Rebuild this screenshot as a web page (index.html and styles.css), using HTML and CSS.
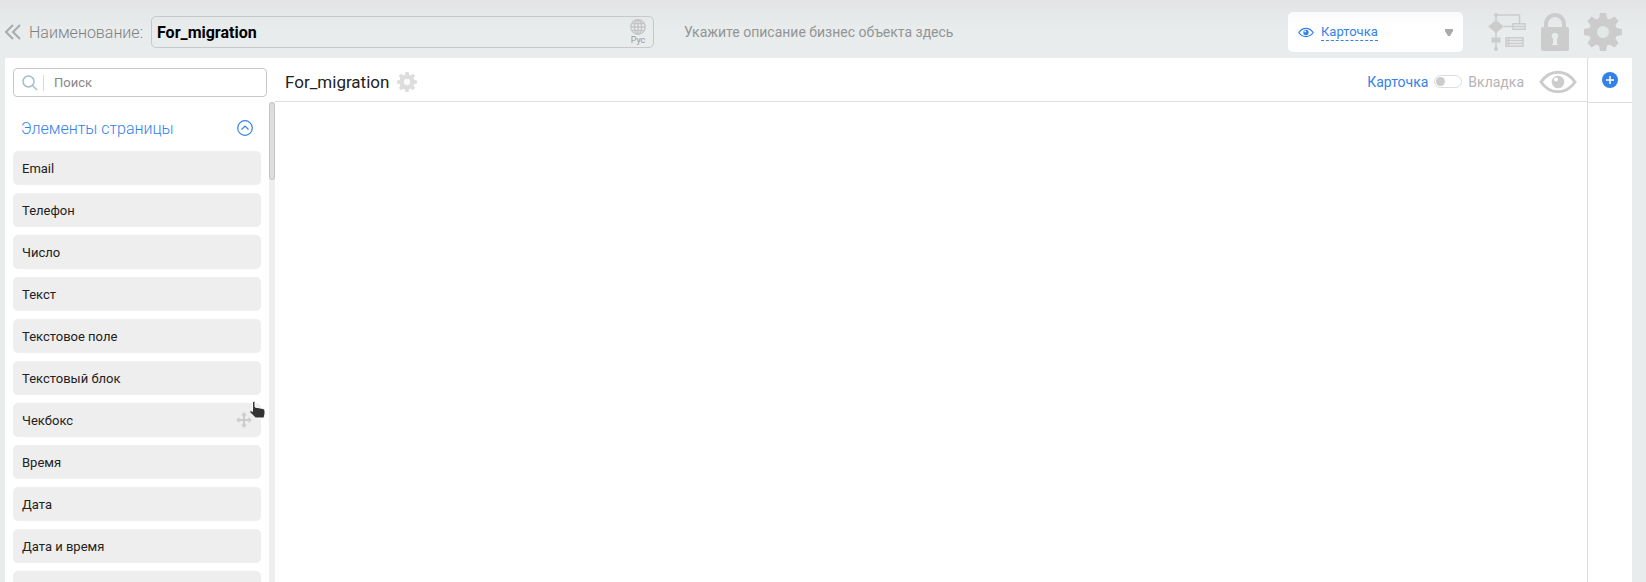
FILE: index.html
```html
<!DOCTYPE html>
<html lang="ru">
<head>
<meta charset="utf-8">
<title>For_migration</title>
<link rel="stylesheet" href="styles.css">
</head>
<body>
<svg class="defs" aria-hidden="true">
  <symbol id="cog" viewBox="0 0 38 38"><mask id="hole"><path fill="#fff" d="M0 0h38v38H0z"/><circle cx="19" cy="19" r="6"/></mask><g mask="url(#hole)"><circle cx="19" cy="19" r="14"/><path id="tooth" d="M13 8l2-3 1-5h6l1 5 2 3z"/><use href="#tooth" transform="rotate(45 19 19)"/><use href="#tooth" transform="rotate(90 19 19)"/><use href="#tooth" transform="rotate(135 19 19)"/><use href="#tooth" transform="rotate(180 19 19)"/><use href="#tooth" transform="rotate(225 19 19)"/><use href="#tooth" transform="rotate(270 19 19)"/><use href="#tooth" transform="rotate(315 19 19)"/></g></symbol>
  <symbol id="eye" viewBox="0 0 38 24"><path fill="none" stroke="currentColor" stroke-width="3" d="M2 12C11-1 27-1 36 12C27 25 11 25 2 12z"/><circle cx="19" cy="12" r="6.3"/><circle class="glint" cx="17" cy="9.5" r="2"/></symbol>
</svg>
<header class="topbar">
  <button class="icon-btn back" aria-label="Назад"><svg width="16" height="16" viewBox="0 0 16 16" fill="none" stroke="currentColor" stroke-width="2"><path d="M8 1L1 8l7 7M15 1L8 8l7 7"/></svg></button>
  <label class="name-label" for="name">Наименование:</label>
  <div class="name-box">
    <input id="name" class="name-input" type="text" value="For_migration">
    <button class="lang"><svg width="16" height="16" viewBox="0 0 16 16" fill="none" stroke="currentColor" stroke-width="1.3"><circle cx="8" cy="8" r="7.3"/><ellipse cx="8" cy="8" rx="3.6" ry="7.3"/><path d="M8 1v14M1 8h14M2 4.5h12M2 11.5h12"/></svg><span>Рус</span></button>
  </div>
  <input class="description" type="text" aria-label="Описание" placeholder="Укажите описание бизнес объекта здесь">
  <div class="view-picker">
    <svg class="blue" width="16" height="11"><use href="#eye"/></svg>
    <select class="view-select" aria-label="Вид"><option>Карточка</option></select>
    <svg class="caret" width="8" height="7" viewBox="0 0 8 7"><path d="M0 0h8v2L5 7H3L0 2z"/></svg>
  </div>
  <nav class="tools">
    <button class="icon-btn" aria-label="Процесс"><svg width="38" height="38" viewBox="0 0 38 38"><g fill="none" stroke="currentColor" stroke-width="1.5"><path d="M8 2h23.500v9M8 2v34M16 13.500h9"/><path d="M25 10.700h12v5.600H25zM25 13.500h12M18 24.700h17v8.600H18zM18 27.500h17M18 30.500h17M20.500 25v8"/></g><circle cx="8" cy="2" r="2"/><circle cx="8" cy="36" r="2"/><path d="M8 7l8 6.500L8 20l-8-6.500zM3.500 24.500h9v5h-9z"/></svg></button>
    <button class="icon-btn" aria-label="Доступ"><svg width="28" height="38" viewBox="0 0 28 38"><path fill="none" stroke="currentColor" stroke-width="4" d="M5 16v-5a9 9 0 0 1 18 0v5"/><path fill-rule="evenodd" d="M2 14h24q2 0 2 2v20q0 2-2 2H2q-2 0-2-2V16q0-2 2-2zM14 20a3 3 0 0 0-2 5.500V31h-1v1h6v-1h-1v-5.500A3 3 0 0 0 14 20z"/></svg></button>
    <button class="icon-btn" aria-label="Настройки"><svg width="38" height="38"><use href="#cog"/></svg></button>
  </nav>
</header>
<div class="workspace">
  <aside class="sidebar">
    <div class="search">
      <svg width="16" height="16" viewBox="0 0 16 16" fill="none" stroke="currentColor" stroke-width="1.500"><circle cx="6.500" cy="6.500" r="5.500"/><path d="M10.500 10.500L15 15"/></svg>
      <input class="search-input" type="search" aria-label="Поиск" placeholder="Поиск">
    </div>
    <div class="panel">
      <div class="panel-body">
        <button class="section-head">Элементы страницы<svg width="16" height="16" viewBox="0 0 16 16" fill="none" stroke="currentColor" stroke-width="1.2"><circle cx="8" cy="8" r="7.300"/><path d="M4.500 9.500L8 6l3.500 3.500"/></svg></button>
        <ul class="elements">
          <li>Email</li>
          <li>Телефон</li>
          <li>Число</li>
          <li>Текст</li>
          <li>Текстовое поле</li>
          <li>Текстовый блок</li>
          <li>Чекбокс
            <svg class="move" width="16" height="16" viewBox="0 0 16 16"><path d="M8 0l3 3.500H9V7h3.500V5L16 8l-3.500 3V9H9v3.500h2L8 16l-3-3.500h2V9H3.500v2L0 8l3.500-3v2H7V3.500H5z"/></svg>
            <svg class="pointer" width="18" height="20" viewBox="0 0 18 20"><path fill="#333" stroke="#fff" d="M4.500 2q1.500-1.500 2.500.5v4.500l8 1.500q2 .5 2 2.500v3l-1 4H7.500L2 12.500q-1-2 1-2l1.500 1z"/></svg>
          </li>
          <li>Время</li>
          <li>Дата</li>
          <li>Дата и время</li>
          <li></li>
        </ul>
      </div>
      <div class="scroll-track"><div class="scroll-thumb"></div></div>
    </div>
  </aside>
  <main class="canvas">
    <div class="canvas-head">
      <h1 class="title">For_migration</h1>
      <button class="icon-btn pale" aria-label="Настройки страницы"><svg width="20" height="20"><use href="#cog"/></svg></button>
      <label class="mode"><span class="blue">Карточка</span><input class="switch" type="checkbox" role="switch"><span>Вкладка</span></label>
      <button class="icon-btn" aria-label="Просмотр"><svg width="38" height="24"><use href="#eye"/></svg></button>
    </div>
  </main>
  <aside class="rail">
    <div class="rail-head"><button class="icon-btn blue" aria-label="Добавить"><svg width="16" height="16" viewBox="0 0 16 16"><circle cx="8" cy="8" r="8"/><path stroke="#fff" stroke-width="1.500" d="M8 4v8M4 8h8"/></svg></button></div>
  </aside>
</div>
</body>
</html>
```
FILE: styles.css
```css
* { box-sizing: border-box; }
body {
  margin: 0;
  height: 100vh;
  display: flex;
  flex-direction: column;
  overflow: hidden;
  background: linear-gradient(#e2e3e5, #e8ecec 28px);
  color: #222;
  font-family: Roboto, "Noto Sans", sans-serif;
  font-size: 14px;
}
button, input, select { font: inherit; color: inherit; border: 0; background: none; padding: 0; margin: 0; outline: 0; }
svg { display: block; fill: currentColor; }
svg[fill="none"] { fill: none; }
.defs { position: absolute; width: 0; height: 0; }
.glint { fill: #fff; }
.icon-btn { color: #ccc; flex: none; }
.blue, .icon-btn.blue { color: #3482e8; }
.icon-btn.pale { color: #ddd; }

.topbar { display: flex; align-items: center; height: 58px; padding: 6px 24px 0 5px; flex: none; }
.back { color: #aaa; }
.name-label { margin: 0 8px; font-size: 16px; font-weight: 300; color: #808080; width: 114px; white-space: nowrap; }
.name-box { flex: 0 1 503px; height: 32px; display: flex; align-items: center; padding: 0 7px 0 5px; border: 1px solid #c8c8c8; border-radius: 5px; }
.name-input { flex: 1; min-width: 0; font-size: 16px; font-weight: 700; color: #000; }
.lang { display: flex; flex-direction: column; align-items: center; font-size: 9px; line-height: 10px; color: #999; }
.lang svg { color: #c4c4c4; }
.description { flex: 1; min-width: 0; margin: 0 30px; }
.description::placeholder { color: #949494; opacity: 1; }
.view-picker { flex: none; width: 175px; height: 40px; display: flex; align-items: center; gap: 7px; padding: 0 10px; border-radius: 5px; background: linear-gradient(#fafafa, #fff 14px); }
.view-select { appearance: none; color: #3482e8; border-bottom: 1px dashed #3482e8; border-radius: 0; font-size: 13px; line-height: 16px; }
.caret { margin-left: auto; color: #aaa; }
.tools { display: flex; align-items: center; gap: 15px; margin-left: 25px; }

.workspace { flex: 1; min-height: 0; display: flex; margin: 0 14px 0 5px; background: #fff; }
.sidebar { width: 270px; flex: none; display: flex; flex-direction: column; padding-top: 10px; }
.search { height: 29px; margin: 0 8px; display: flex; align-items: center; gap: 5px; padding: 0 8px; border: 1px solid #c8c8c8; border-radius: 4px; color: #a5bfc8; flex: none; }
.search-input { flex: 1; min-width: 0; padding-left: 10px; border-left: 1px solid #d4dcdf; font-size: 13px; line-height: 16px; color: #222; appearance: none; }
.search-input::placeholder { color: #888; opacity: 1; }
.panel { flex: 1; min-height: 0; display: flex; margin-top: 5px; }
.panel-body { flex: 1; overflow: hidden; padding: 0 8px; }
.section-head { display: flex; align-items: center; justify-content: space-between; width: 100%; height: 49px; padding: 3px 8px 0; font-size: 16px; font-weight: 300; color: #3482e8; }
.elements { list-style: none; margin: 0; padding: 0; display: grid; gap: 8px; font-size: 13px; }
.elements li { position: relative; height: 34px; display: flex; align-items: center; justify-content: space-between; padding: 0 9px; border-radius: 5px; background: #eee; }
.move { color: #ccc; }
.pointer { position: absolute; right: -5px; top: -3px; }
.scroll-track { width: 6px; background: #eee; }
.scroll-thumb { height: 78px; background: #ddd; border: 1px solid #c4c4c4; border-radius: 3px; }

.canvas { flex: 1; min-width: 0; }
.canvas-head { display: flex; align-items: center; height: 44px; padding: 4px 10px 0; border-bottom: 1px solid #ddd; }
.title { margin: 0 8px 0 0; font-size: 17px; font-weight: 400; }
.mode { margin: 0 15px 0 auto; display: flex; align-items: center; gap: 6px; color: #b4b4b4; }
.switch { appearance: none; width: 28px; height: 13px; padding: 1px; border: 1px solid #ddd; border-radius: 7px; }
.switch::before { content: ""; display: block; width: 9px; height: 9px; border-radius: 50%; background: #ccc; }
.rail { width: 45px; flex: none; border-left: 1px solid #ddd; }
.rail-head { height: 45px; display: flex; align-items: center; justify-content: center; border-bottom: 1px solid #ddd; }
```
